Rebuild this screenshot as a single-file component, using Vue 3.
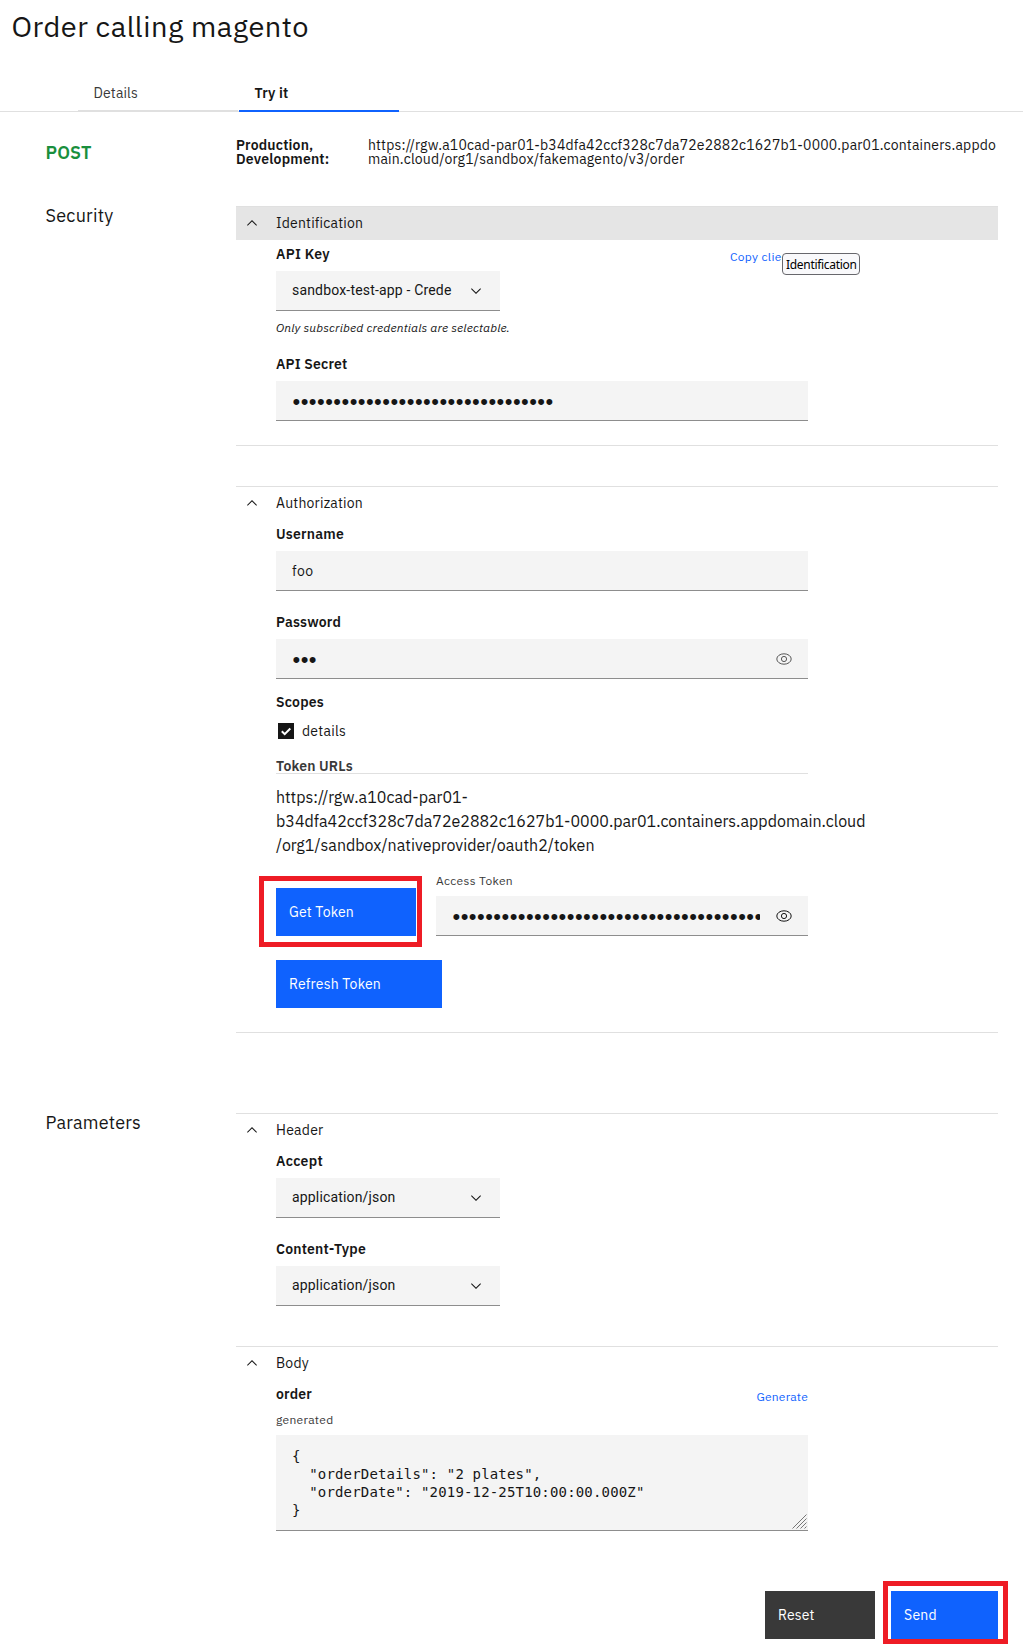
<script setup>
import { ref } from 'vue'

// Tracks a line of text out to a given width in pixels.
const vTrack = {
  mounted(el, { value }) {
    const range = document.createRange()
    range.selectNodeContents(el)
    const natural = range.getBoundingClientRect().width
    el.style.letterSpacing = (value - natural) / el.textContent.length + 'px'
  }
}

const tabs = [
  { name: 'Details', width: 44.5 },
  { name: 'Try it', width: 34 }
]
const activeTab = ref('Try it')

const headers = [
  { name: 'Accept', width: 47, value: 'application/json' },
  { name: 'Content-Type', width: 90, value: 'application/json' }
]

const secret = '•'.repeat(32)
const token = '•'.repeat(44)
const body = `{
  "orderDetails": "2 plates",
  "orderDate": "2019-12-25T10:00:00.000Z"
}`
</script>

<template>
  <div class="page">
    <h1><span v-track="297.5">Order calling magento</span></h1>

    <nav class="tabs">
      <a v-for="t in tabs" :key="t.name" class="tab" :class="{ active: t.name === activeTab }" @click="activeTab = t.name">
        <span v-track="t.width">{{ t.name }}</span>
      </a>
    </nav>

    <div class="operation">
      <div class="method"><span v-track="46">POST</span></div>
      <div class="envs">
        <div><span v-track="77.5">Production,</span></div>
        <div><span v-track="93.5">Development:</span></div>
      </div>
      <div class="endpoint">
        <div><span v-track="628">https://rgw.a10cad-par01-b34dfa42ccf328c7da72e2882c1627b1-0000.par01.containers.appdo</span></div>
        <div><span v-track="316.5">main.cloud/org1/sandbox/fakemagento/v3/order</span></div>
      </div>
    </div>

    <section class="section">
      <h2><span v-track="68">Security</span></h2>
      <div class="panels">
        <div class="panel closed-off">
          <div class="panel-head hovered">
            <svg class="chevron" viewBox="0 0 16 16"><path d="M8 5l5 5-.7.7L8 6.4l-4.3 4.3L3 10z" /></svg>
            <span v-track="87">Identification</span>
            <div class="tooltip"><span v-track="70.5">Identification</span></div>
          </div>
          <div class="panel-body">
            <div class="field">
              <div class="label-row">
                <label><span v-track="54">API Key</span></label>
                <a class="link copy"><span v-track="80">Copy client ID</span></a>
              </div>
              <div class="select">
                <span v-track="159.5">sandbox-test-app - Crede</span>
                <svg class="chevron" viewBox="0 0 16 16"><path d="M8 11L3 6l.7-.7L8 9.6l4.3-4.3.7.7z" /></svg>
              </div>
            </div>
            <div class="hint"><span v-track="234">Only subscribed credentials are selectable.</span></div>
            <div class="field secret">
              <label><span v-track="71.5">API Secret</span></label>
              <div class="input"><span class="dots">{{ secret }}</span></div>
            </div>
          </div>
        </div>

        <div class="panel closed-off">
          <div class="panel-head">
            <svg class="chevron" viewBox="0 0 16 16"><path d="M8 5l5 5-.7.7L8 6.4l-4.3 4.3L3 10z" /></svg>
            <span v-track="87">Authorization</span>
          </div>
          <div class="panel-body">
            <div class="field">
              <label><span v-track="68">Username</span></label>
              <div class="input"><span v-track="21.5">foo</span></div>
            </div>
            <div class="field next">
              <label><span v-track="65">Password</span></label>
              <div class="input">
                <span class="dots">•••</span>
                <svg class="eye faded" viewBox="0 0 16 16"><ellipse cx="8" cy="8" rx="7.2" ry="5.2" /><circle cx="8" cy="8" r="2.6" /></svg>
              </div>
            </div>
            <label class="scopes"><span v-track="48">Scopes</span></label>
            <div class="check-row">
              <svg class="checkbox" viewBox="0 0 16 16"><rect width="16" height="16" /><path d="M3.8 8.2l2.9 2.9 5.6-5.6" /></svg>
              <span v-track="44">details</span>
            </div>
            <div class="token-title"><span v-track="77">Token URLs</span></div>
            <div class="token-url">
              <div><span v-track="192">https://rgw.a10cad-par01-</span></div>
              <div><span v-track="589.5">b34dfa42ccf328c7da72e2882c1627b1-0000.par01.containers.appdomain.cloud</span></div>
              <div><span v-track="318.5">/org1/sandbox/nativeprovider/oauth2/token</span></div>
            </div>
            <div class="token-row">
              <div class="btn get">
                <span v-track="65">Get Token</span>
                <i class="mark"></i>
              </div>
              <div class="access">
                <div class="small"><span v-track="77">Access Token</span></div>
                <div class="input">
                  <span class="dots">{{ token }}</span>
                  <svg class="eye" viewBox="0 0 16 16"><ellipse cx="8" cy="8" rx="7.2" ry="5.2" /><circle cx="8" cy="8" r="2.6" /></svg>
                </div>
              </div>
            </div>
            <div class="btn refresh"><span v-track="92">Refresh Token</span></div>
          </div>
        </div>
      </div>
    </section>

    <section class="section parameters">
      <h2><span v-track="95.5">Parameters</span></h2>
      <div class="panels">
        <div class="panel">
          <div class="panel-head">
            <svg class="chevron" viewBox="0 0 16 16"><path d="M8 5l5 5-.7.7L8 6.4l-4.3 4.3L3 10z" /></svg>
            <span v-track="47.5">Header</span>
          </div>
          <div class="panel-body">
            <div v-for="(h, i) in headers" :key="h.name" class="field" :class="{ next: i > 0 }">
              <label><span v-track="h.width">{{ h.name }}</span></label>
              <div class="select">
                <span v-track="103.5">{{ h.value }}</span>
                <svg class="chevron" viewBox="0 0 16 16"><path d="M8 11L3 6l.7-.7L8 9.6l4.3-4.3.7.7z" /></svg>
              </div>
            </div>
          </div>
        </div>

        <div class="panel">
          <div class="panel-head">
            <svg class="chevron" viewBox="0 0 16 16"><path d="M8 5l5 5-.7.7L8 6.4l-4.3 4.3L3 10z" /></svg>
            <span v-track="33">Body</span>
          </div>
          <div class="panel-body">
            <div class="label-row">
              <label><span v-track="36">order</span></label>
              <a class="link"><span v-track="51.5">Generate</span></a>
            </div>
            <div class="small generated"><span v-track="57.5">generated</span></div>
            <div class="textarea">
              <pre>{{ body }}</pre>
              <svg class="grip" viewBox="0 0 15 15"><path d="M.5 14.5l14-14M4.5 14.5l10-10M8.5 14.5l6-6M12.5 14.5l2-2" /></svg>
            </div>
          </div>
        </div>
      </div>
    </section>

    <footer class="actions">
      <div class="btn reset"><span v-track="36.5">Reset</span></div>
      <div class="btn send">
        <span v-track="33">Send</span>
        <i class="mark"></i>
      </div>
    </footer>
  </div>
</template>

<style>
body {
  background: #fff;
}
</style>

<style scoped>
.page {
  box-sizing: border-box;
  width: 1023px;
  height: 1645px;
  padding-top: 8px;
  overflow: hidden;
  font-family: "IBM Plex Sans", Roboto, "Liberation Sans", sans-serif;
  font-size: 14px;
  line-height: 20px;
  color: #161616;
}
.page * {
  box-sizing: border-box;
}
span {
  white-space: nowrap;
}
h1 {
  margin: 0 0 28px 11.5px;
  font-size: 29px;
  line-height: 36px;
  font-weight: 400;
}
.tabs {
  display: flex;
  gap: 1px;
  height: 40px;
  padding-left: 78px;
  box-shadow: inset 0 -1px #e0e0e0;
}
.tab {
  width: 160px;
  padding: 11px 0 0 15.5px;
  border-bottom: 2px solid #e0e0e0;
  color: #393939;
}
.tab.active {
  border-color: #0f62fe;
  color: #161616;
  font-weight: 600;
}
.operation {
  display: flex;
  height: 92px;
  padding: 26px 0 0 45px;
  line-height: 14px;
}
.method {
  width: 191px;
  padding: 3px 0 0 0.5px;
  font-size: 18px;
  line-height: 24px;
  font-weight: 600;
  color: #198f3d;
}
.envs {
  width: 132px;
  font-weight: 600;
}
.section {
  display: flex;
  padding-left: 45px;
}
.parameters {
  margin-top: 78px;
}
h2 {
  width: 191px;
  margin: 0;
  padding-left: 0.5px;
  font-size: 18px;
  line-height: 24px;
  font-weight: 400;
}
.panels {
  display: flex;
  flex-direction: column;
  gap: 40px;
  width: 762px;
  padding-top: 2px;
}
.panel.closed-off {
  padding-bottom: 24px;
  border-bottom: 1px solid #e0e0e0;
}
.panel-head {
  position: relative;
  display: flex;
  align-items: center;
  gap: 16px;
  height: 34px;
  padding-left: 8px;
  box-shadow: inset 0 1px #e0e0e0;
}
.panel-head.hovered {
  background: #e5e5e5;
}
.chevron {
  flex: none;
  width: 16px;
  height: 16px;
  fill: #161616;
}
.tooltip {
  position: absolute;
  left: 546px;
  top: 47px;
  width: 78px;
  height: 22px;
  padding-left: 3px;
  border: 1px solid #67676c;
  border-radius: 4px;
  background: #f9f9fb;
  font: 12px/21px "Noto Sans", "Open Sans", sans-serif;
  color: #000;
}
.panel-body {
  width: 572px;
  padding: 4px 0 0 40px;
}
label {
  display: block;
  font-weight: 600;
}
.label-row {
  display: flex;
  justify-content: space-between;
}
.link {
  height: 20px;
  padding-top: 5px;
  font-size: 12px;
  line-height: 16px;
  color: #0f62fe;
}
.copy {
  width: 52px;
  margin-right: 26px;
  overflow: hidden;
}
.field {
  display: flex;
  flex-direction: column;
  gap: 7px;
}
.next {
  margin-top: 21px;
}
.secret {
  margin-top: 18px;
}
.select,
.input {
  display: flex;
  align-items: center;
  justify-content: space-between;
  height: 40px;
  padding: 0 16px;
  border-bottom: 1px solid #8d8d8d;
  background: #f4f4f4;
}
.select {
  width: 224px;
  font-family: Roboto, sans-serif;
}
.select span {
  margin-top: -1px;
}
.input span {
  margin-top: 1px;
}
.input .dots {
  margin: 2px 0 0 0.5px;
  overflow: hidden;
  font-family: "Liberation Sans", Arial, sans-serif;
  font-size: 22px;
  line-height: 24px;
  letter-spacing: 0.46px;
}
.hint {
  margin-top: 9px;
  font-size: 12px;
  line-height: 16px;
  font-style: italic;
}
.eye {
  flex: none;
  width: 16px;
  height: 16px;
  fill: none;
  stroke: #161616;
  stroke-width: 1;
}
.eye.faded {
  opacity: 0.7;
}
.scopes {
  margin-top: 13px;
}
.check-row {
  display: flex;
  align-items: center;
  gap: 8px;
  margin-top: 9px;
  padding-left: 2px;
}
.checkbox {
  width: 16px;
  height: 16px;
  fill: #161616;
}
.checkbox path {
  fill: none;
  stroke: #fff;
  stroke-width: 2;
}
.token-title {
  margin-top: 17px;
  height: 16px;
  line-height: 16px;
  font-weight: 600;
  color: #393939;
  box-shadow: inset 0 -1px #e0e0e0;
}
.token-url {
  margin-top: 11px;
  font-size: 16px;
  line-height: 24px;
}
.token-row {
  display: flex;
  align-items: flex-end;
  gap: 20px;
  margin-top: 16px;
}
.access {
  width: 372px;
}
.access .input {
  margin-top: 7px;
}
.access .dots {
  width: 307.5px;
}
.small {
  font-size: 12px;
  line-height: 16px;
  color: #393939;
}
.btn {
  position: relative;
  display: flex;
  align-items: center;
  height: 48px;
  padding-left: 13px;
  background: #0f62fe;
  color: #fff;
}
.get {
  width: 140px;
}
.refresh {
  width: 166px;
  margin-top: 24px;
}
.mark {
  position: absolute;
  border: 5px solid #ee1c25;
}
.get .mark {
  inset: -12px -6px -11px -17px;
}
.send .mark {
  inset: -10px -10px -5px -8px;
}
.generated {
  margin-top: 8px;
}
.textarea {
  position: relative;
  height: 96px;
  margin-top: 7px;
  padding: 12px 16px 0;
  border-bottom: 1px solid #8d8d8d;
  background: #f4f4f4;
}
pre {
  margin: 0;
  font: 14px/18px "DejaVu Sans Mono", monospace;
  letter-spacing: 0.17px;
}
.grip {
  position: absolute;
  right: 1px;
  bottom: 1px;
  width: 15px;
  height: 15px;
  fill: none;
  stroke: #777;
  stroke-width: 1;
}
.actions {
  display: flex;
  justify-content: flex-end;
  gap: 16px;
  margin-top: 60px;
  padding-right: 25px;
}
.reset {
  width: 110px;
  background: #393939;
}
.send {
  width: 107px;
}
</style>
